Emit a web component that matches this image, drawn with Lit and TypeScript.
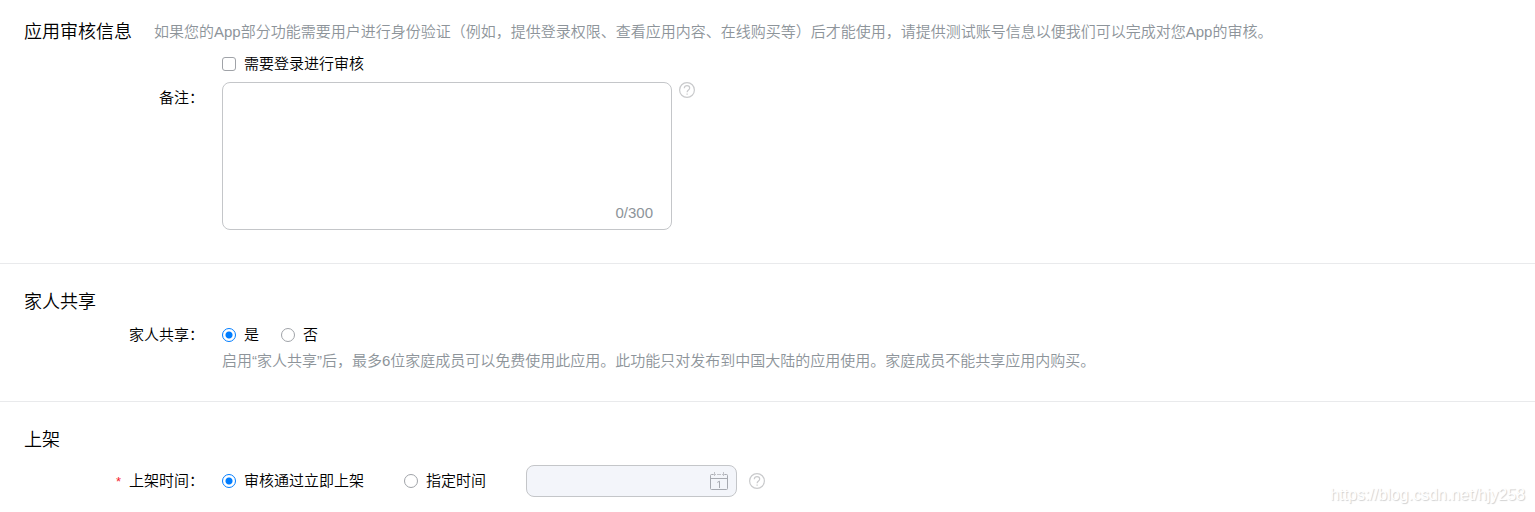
import { LitElement, html, css, svg } from "lit";
import { customElement, state } from "lit/decorators.js";

const helpGlyph = svg`
  <circle cx="8" cy="8" r="7.4" />
  <path d="M5.3 6.2C5.3 4.6 6.5 3.6 8 3.6s2.7 1 2.7 2.4c0 1.9-2.6 2-2.6 4.2" />
  <path d="M8.1 11.4v1.4" />
`;

@customElement("help-tip")
export class HelpTip extends LitElement {
  static styles = css`
    :host {
      display: block;
      flex: none;
    }
    .tip {
      display: block;
      padding: 0;
      border: 0;
      background: none;
      cursor: pointer;
    }
    .icon {
      display: block;
      fill: none;
      stroke: #c9cacc;
      stroke-width: 1.2;
    }
  `;

  render() {
    return html`<button class="tip" type="button" aria-label="帮助">
      <svg class="icon" width="16" height="16" viewBox="0 0 16 16">${helpGlyph}</svg>
    </button>`;
  }
}

@customElement("app-root")
export class AppRoot extends LitElement {
  static styles = css`
    :host {
      display: block;
      position: relative;
      background: #fff;
      color: #000;
      font: 350 15px/24px "Liberation Sans", "Noto Sans CJK SC", sans-serif;
    }
    * {
      box-sizing: border-box;
    }
    .section {
      padding: 26px 24px 28px;
      border-bottom: 1px solid #e9eaec;
    }
    .section.first {
      padding-top: 20px;
      padding-bottom: 33px;
    }
    .section.last {
      padding-bottom: 15px;
      border-bottom: 0;
    }
    .head {
      display: flex;
      gap: 22px;
      margin-bottom: 9px;
    }
    .first .head {
      margin-bottom: 8px;
    }
    .last .head {
      margin-bottom: 13px;
    }
    .title {
      margin: 0;
      font-size: 18px;
      font-weight: 350;
      white-space: nowrap;
    }
    .hint {
      margin: 0;
      color: #8d949a;
    }
    .form {
      display: grid;
      grid-template-columns: 180px minmax(0, 1fr);
      column-gap: 18px;
      row-gap: 2px;
    }
    .form.notes {
      row-gap: 6px;
    }
    .name {
      justify-self: end;
    }
    .notes .name {
      padding-top: 4px;
    }
    .last .name {
      align-self: center;
    }
    .star {
      margin-right: 8px;
      color: #f5222d;
      font-size: 13px;
    }
    .value {
      grid-column: 2;
      display: flex;
      align-items: center;
    }
    .value.top {
      align-items: flex-start;
      gap: 7px;
    }
    .options {
      gap: 22px;
    }
    .schedule {
      gap: 40px;
    }
    .picker {
      display: flex;
      align-items: center;
      gap: 12px;
    }
    .choice {
      display: flex;
      align-items: center;
      gap: 8px;
      white-space: nowrap;
    }
    .mark {
      appearance: none;
      flex: none;
      width: 14px;
      height: 14px;
      margin: 0;
      border: 1px solid #a0a3a8;
      background: #fff;
    }
    .mark.box {
      border-radius: 3px;
    }
    .mark.box:checked {
      border-color: #007dff;
      background: #007dff;
    }
    .mark.dot {
      border-radius: 50%;
    }
    .mark.dot:checked {
      border-color: #007dff;
      background: radial-gradient(circle, #007dff 3px, #fff 4px);
    }
    .area {
      position: relative;
      width: 450px;
      max-width: 100%;
    }
    .text {
      display: block;
      width: 100%;
      height: 148px;
      padding: 8px 16px 30px;
      border: 1px solid #c4c6c9;
      border-radius: 8px;
      outline: 0;
      resize: none;
      font: inherit;
    }
    .count {
      position: absolute;
      right: 19px;
      bottom: 5px;
      color: #8d949a;
    }
    .field {
      position: relative;
      width: 211px;
    }
    .date {
      display: block;
      width: 100%;
      height: 32px;
      padding: 0 36px 0 12px;
      border: 1px solid #c4c6c9;
      border-radius: 8px;
      background: #f3f5fa;
      font: inherit;
    }
    .calendar {
      position: absolute;
      top: 6px;
      right: 8px;
      fill: none;
      stroke: #a6a9b0;
    }
    .watermark {
      position: absolute;
      right: 10px;
      bottom: 5px;
      color: #fff;
      font-size: 16px;
      font-weight: 400;
      text-shadow: 1px 1px 1px #d0d0d0;
    }
  `;

  @state() private notes = "";

  private onNotes(event: Event) {
    this.notes = (event.target as HTMLTextAreaElement).value;
  }

  render() {
    return html`
      <section class="section first">
        <div class="head">
          <h2 class="title">应用审核信息</h2>
          <p class="hint">如果您的App部分功能需要用户进行身份验证（例如，提供登录权限、查看应用内容、在线购买等）后才能使用，请提供测试账号信息以便我们可以完成对您App的审核。</p>
        </div>
        <div class="form notes">
          <div class="value">
            <label class="choice"><input class="mark box" type="checkbox" />需要登录进行审核</label>
          </div>
          <label class="name" for="notes">备注：</label>
          <div class="value top">
            <div class="area">
              <textarea class="text" id="notes" maxlength="300" .value=${this.notes} @input=${this.onNotes}></textarea>
              <span class="count">${this.notes.length}/300</span>
            </div>
            <help-tip></help-tip>
          </div>
        </div>
      </section>

      <section class="section">
        <div class="head"><h2 class="title">家人共享</h2></div>
        <div class="form">
          <span class="name" id="share">家人共享：</span>
          <div class="value options" role="radiogroup" aria-labelledby="share">
            <label class="choice"><input class="mark dot" type="radio" name="share" checked />是</label>
            <label class="choice"><input class="mark dot" type="radio" name="share" />否</label>
          </div>
          <p class="hint value">启用“家人共享”后，最多6位家庭成员可以免费使用此应用。此功能只对发布到中国大陆的应用使用。家庭成员不能共享应用内购买。</p>
        </div>
      </section>

      <section class="section last">
        <div class="head"><h2 class="title">上架</h2></div>
        <div class="form">
          <span class="name" id="release"><span class="star">*</span>上架时间：</span>
          <div class="value schedule" role="radiogroup" aria-labelledby="release">
            <label class="choice"><input class="mark dot" type="radio" name="release" checked />审核通过立即上架</label>
            <label class="choice"><input class="mark dot" type="radio" name="release" />指定时间</label>
            <div class="picker">
              <div class="field">
                <input class="date" type="text" aria-label="上架日期" disabled />
                <svg class="calendar" width="20" height="20" viewBox="0 0 20 20">
                  <path d="M4 3.5H2.5a1 1 0 0 0-1 1v13a1 1 0 0 0 1 1h15a1 1 0 0 0 1-1v-13a1 1 0 0 0-1-1H16M1.5 7.5h17" />
                  <path d="M5.5 1v4M14.5 1v4M4 3.5h3M8 3.5h4M13 3.5h3" stroke="#c0c2c8" />
                  <path d="M8.3 11.4l2.2-1.2v6.8" />
                </svg>
              </div>
              <help-tip></help-tip>
            </div>
          </div>
        </div>
      </section>
      <span class="watermark">https://blog.csdn.net/hjy258</span>
    `;
  }
}
